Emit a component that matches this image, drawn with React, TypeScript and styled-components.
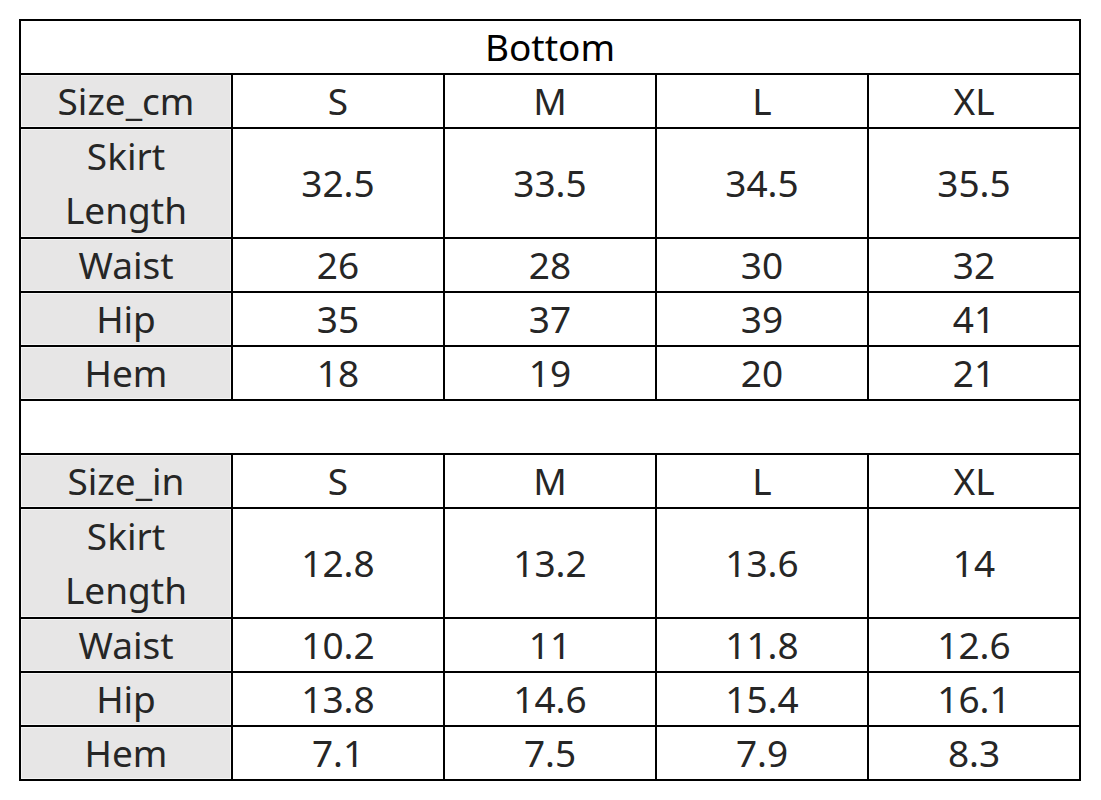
import * as React from 'react';
import styled, { createGlobalStyle } from 'styled-components';

const GlobalStyle = createGlobalStyle`
  html, body {
    margin: 0;
    padding: 0;
    background: #ffffff;
  }
`;

const Page = styled.div`
  padding: 19px 0 0 19px;
  font-family: 'Noto Sans', 'Open Sans', sans-serif;
`;

const Table = styled.table`
  border-collapse: collapse;
  border-spacing: 0;
  width: 1062px;
  table-layout: fixed;
  color: #262626;
`;

const Row = styled.tr<{ $tall?: boolean }>`
  height: ${(p) => (p.$tall ? '109px' : '54px')};
`;

const Cell = styled.td<{ $label?: boolean }>`
  border: 2px solid #000000;
  padding: 0;
  text-align: center;
  vertical-align: middle;
  font-size: 37px;
  line-height: 48px;
  background: ${(p) => (p.$label ? '#e7e6e6' : '#ffffff')};
  box-shadow: ${(p) => (p.$label ? 'inset 0 0 0 1px #f4f4f4' : 'none')};
`;

const TwoLine = styled.span`
  display: block;
  line-height: 54px;
`;

const TitleCell = styled.td`
  border: 2px solid #000000;
  padding: 0;
  text-align: center;
  vertical-align: middle;
  font-size: 37px;
  line-height: 48px;
  color: #000000;
`;

const BlankCell = styled.td`
  border: 2px solid #000000;
  padding: 0;
`;

type Section = {
  head: string;
  rows: { label: string; values: string[]; tall?: boolean }[];
};

const sizes = ['S', 'M', 'L', 'XL'];

const sections: Section[] = [
  {
    head: 'Size_cm',
    rows: [
      { label: 'Skirt Length', values: ['32.5', '33.5', '34.5', '35.5'], tall: true },
      { label: 'Waist', values: ['26', '28', '30', '32'] },
      { label: 'Hip', values: ['35', '37', '39', '41'] },
      { label: 'Hem', values: ['18', '19', '20', '21'] },
    ],
  },
  {
    head: 'Size_in',
    rows: [
      { label: 'Skirt Length', values: ['12.8', '13.2', '13.6', '14'], tall: true },
      { label: 'Waist', values: ['10.2', '11', '11.8', '12.6'] },
      { label: 'Hip', values: ['13.8', '14.6', '15.4', '16.1'] },
      { label: 'Hem', values: ['7.1', '7.5', '7.9', '8.3'] },
    ],
  },
];

const SectionRows = ({ section }: { section: Section }) => (
  <>
    <Row>
      <Cell $label>{section.head}</Cell>
      {sizes.map((s) => (
        <Cell key={s}>{s}</Cell>
      ))}
    </Row>
    {section.rows.map((r) => (
      <Row key={r.label} $tall={r.tall}>
        <Cell $label>
          {r.tall ? (
            <TwoLine>
              Skirt
              <br />
              Length
            </TwoLine>
          ) : (
            r.label
          )}
        </Cell>
        {r.values.map((v, i) => (
          <Cell key={i}>{v}</Cell>
        ))}
      </Row>
    ))}
  </>
);

export const App = () => (
  <Page>
    <GlobalStyle />
    <Table>
      <tbody>
        <Row>
          <TitleCell colSpan={5}>Bottom</TitleCell>
        </Row>
        <SectionRows section={sections[0]} />
        <Row>
          <BlankCell colSpan={5} />
        </Row>
        <SectionRows section={sections[1]} />
      </tbody>
    </Table>
  </Page>
);

export default App;
